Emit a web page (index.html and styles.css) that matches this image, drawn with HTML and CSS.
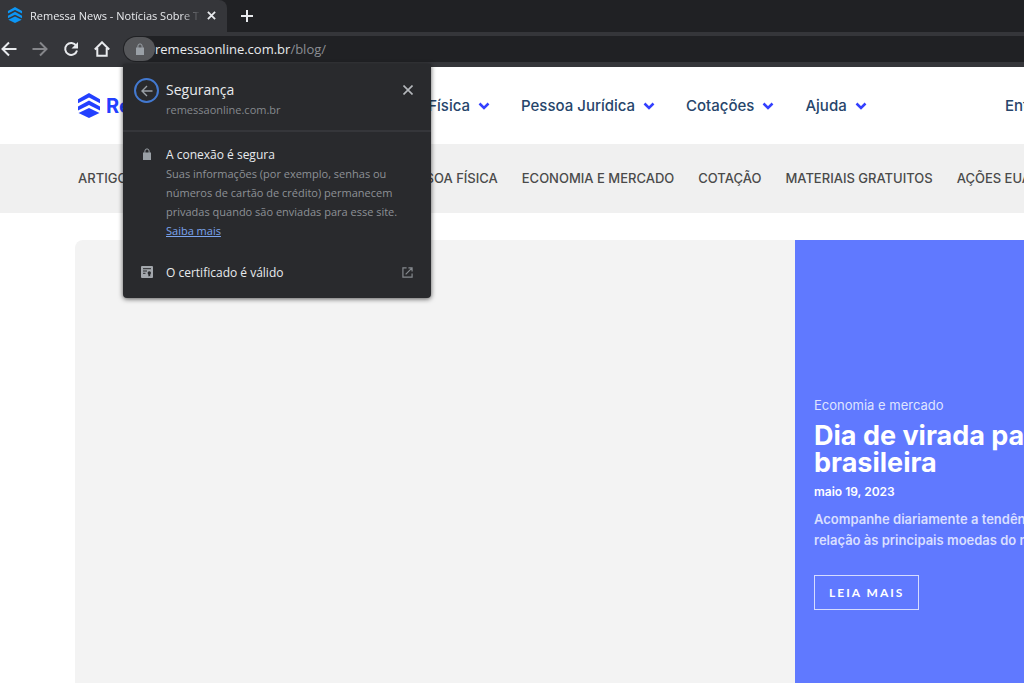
FILE: index.html
```html
<!DOCTYPE html>
<html lang="pt-BR">
<head>
<meta charset="utf-8">
<meta name="viewport" content="width=device-width, initial-scale=1">
<title>Remessa News</title>
<link rel="stylesheet" href="styles.css">
</head>
<body>
<div class="browser">
  <div class="tabstrip">
    <div class="tab">
      <svg class="favicon" viewBox="0 0 22 25" aria-hidden="true"><path d="M11 0 22 6.300v4L11 4.500 0 10.300v-4z"/><path d="M11 7.500 22 13.500v4L11 12 0 17.500v-4z"/><path d="M11 15 21.500 20 11 25 .5 20z"/></svg>
      <span class="tab-title">Remessa News - Notícias Sobre Transferências</span>
      <button class="icon-btn tab-close" aria-label="Fechar guia"><svg viewBox="0 0 10 10"><path d="M1 1l8 8M9 1l-8 8"/></svg></button>
    </div>
    <button class="icon-btn new-tab" aria-label="Nova guia"><svg viewBox="0 0 12 12"><path d="M6 0v12M0 6h12"/></svg></button>
  </div>
  <div class="toolbar">
    <div class="controls">
      <button class="icon-btn" aria-label="Voltar"><svg viewBox="0 0 16 16"><path d="M15.500 8H2M8 1.500 1.500 8 8 14.500"/></svg></button>
      <button class="icon-btn dim" aria-label="Avançar"><svg viewBox="0 0 16 16"><path d="M.5 8H14M8 1.500 14.500 8 8 14.500"/></svg></button>
      <button class="icon-btn" aria-label="Recarregar"><svg viewBox="0 0 16 16"><path d="M13.200 4.600A6 6 0 1 0 14 9.500"/><path class="fill" d="M15 1v6.500H8.500z"/></svg></button>
      <button class="icon-btn" aria-label="Página inicial"><svg viewBox="0 0 16 16"><path d="M.8 8.500 8 1.300l7.200 7.200M3.300 7v7.800h9.400V7"/></svg></button>
    </div>
    <div class="omnibox">
      <button class="lock-btn" aria-label="Informações do site"><svg viewBox="0 0 10 12"><path d="M1 4.500h8V12H1z"/><path class="shackle" d="M2.900 5V3a2.100 2.100 0 0 1 4.200 0v2"/></svg></button>
      <span class="url">remessaonline.com.br<span class="path">/blog/</span></span>
      <section class="popup" aria-label="Segurança">
        <header class="popup-head">
          <button class="back" aria-label="Voltar"><svg viewBox="0 0 12 12"><path d="M11.500 6H1.500M6 1 1 6l5 5"/></svg></button>
          <div class="popup-heading">
            <h2 class="popup-title">Segurança</h2>
            <p class="popup-host">remessaonline.com.br</p>
          </div>
          <button class="icon-btn popup-close" aria-label="Fechar"><svg viewBox="0 0 10 10"><path d="M.5.5l9 9M9.500.5l-9 9"/></svg></button>
        </header>
        <div class="popup-body">
          <svg class="row-lock" viewBox="0 0 10 12" aria-hidden="true"><path d="M1 4.500h8V12H1z"/><path class="shackle" d="M2.900 5V3a2.100 2.100 0 0 1 4.200 0v2"/></svg>
          <div class="connection">
            <h3 class="row-title">A conexão é segura</h3>
            <p class="row-text">Suas informações (por exemplo, senhas ou<br>números de cartão de crédito) permanecem<br>privadas quando são enviadas para esse site.<br><a href="#">Saiba mais</a></p>
          </div>
        </div>
        <button class="cert">
          <svg class="cert-icon" viewBox="0 0 12 12" aria-hidden="true"><rect width="12" height="12" rx="1"/><path d="M2 2.700h8M2 5h4M2 7.300h2.500"/><circle cx="8.300" cy="7" r="1.700"/><path class="ribbon" d="M7.400 8h1.800v2.600l-.9-.6-.9.600z"/></svg>
          <span>O certificado é válido</span>
          <svg class="external" viewBox="0 0 12 12" aria-hidden="true"><path d="M5 1H1v10h10V7M7 1h4v4M11 1 4 8"/></svg>
        </button>
      </section>
    </div>
  </div>
</div>

<header class="site-head">
  <a class="brand" href="#">
    <svg viewBox="0 0 22 25" aria-hidden="true"><path d="M11 0 22 6.300v4L11 4.500 0 10.300v-4z"/><path d="M11 7.500 22 13.500v4L11 12 0 17.500v-4z"/><path d="M11 15 21.500 20 11 25 .5 20z"/></svg>
    <span>Remessa Online</span>
  </a>
  <nav class="main-nav" aria-label="Principal">
    <a href="#">Pessoa Física<svg viewBox="0 0 12 8"><path d="M1.500 1.500 6 6l4.500-4.500"/></svg></a>
    <a href="#">Pessoa Jurídica<svg viewBox="0 0 12 8"><path d="M1.500 1.500 6 6l4.500-4.500"/></svg></a>
    <a href="#">Cotações<svg viewBox="0 0 12 8"><path d="M1.500 1.500 6 6l4.500-4.500"/></svg></a>
    <a href="#">Ajuda<svg viewBox="0 0 12 8"><path d="M1.500 1.500 6 6l4.500-4.500"/></svg></a>
  </nav>
  <a class="login" href="#">Entrar</a>
</header>

<nav class="topics" aria-label="Categorias">
  <a class="topic-first" href="#">ARTIGOS</a>
  <a href="#">PESSOA FÍSICA</a>
  <a href="#">ECONOMIA E MERCADO</a>
  <a href="#">COTAÇÃO</a>
  <a href="#">MATERIAIS GRATUITOS</a>
  <a href="#">AÇÕES EUA</a>
</nav>

<main class="feature">
  <div class="feature-image"></div>
  <article class="feature-card">
    <p class="category">Economia e mercado</p>
    <h1 class="headline">Dia de virada para a bolsa<br>brasileira</h1>
    <p class="date">maio 19, 2023</p>
    <p class="summary">Acompanhe diariamente a tendência do real em<br>relação às principais moedas do mundo</p>
    <a class="more" href="#">LEIA MAIS</a>
  </article>
</main>
</body>
</html>
```
FILE: styles.css
```css
* { box-sizing: border-box; }
body {
  margin: 0;
  min-height: 100vh;
  display: flex;
  flex-direction: column;
  overflow: hidden;
  background: #fff;
  font-family: Inter, "Liberation Sans", sans-serif;
}
h1, h2, h3, p { margin: 0; }
a { color: inherit; text-decoration: none; }
button { padding: 0; border: 0; background: none; color: inherit; font: inherit; }
svg { display: block; flex: none; }

/* Browser chrome */
.browser { color: #e8eaed; font-family: "Open Sans", "Noto Sans", sans-serif; font-size: 12px; }
.tabstrip { display: flex; align-items: center; height: 32px; background: #202124; }
.tab {
  display: flex;
  align-items: center;
  width: 227px;
  height: 32px;
  padding: 0 11px 2px 7px;
  background: #35363a;
  border-radius: 0 8px 0 0;
}
.favicon { width: 16px; height: 16px; fill: #0c96f5; }
.tab-title {
  flex: 1;
  margin: 0 6px 0 7px;
  overflow: hidden;
  white-space: nowrap;
  font-size: 11px;
  mask-image: linear-gradient(90deg, #000 88%, transparent);
}
.icon-btn svg { width: 100%; fill: none; stroke: currentColor; stroke-width: 2; }
.tab-close { width: 9px; }
.new-tab { width: 12px; margin-left: 14px; }
.toolbar {
  display: flex;
  height: 35px;
  padding: 4px 0 5px 1px;
  background: #35363a;
}
.controls { display: flex; align-items: center; gap: 15px; width: 122px; }
.controls .icon-btn { width: 16px; }
.controls .fill { fill: currentColor; stroke: none; }
.controls .dim { color: #85868a; }
.omnibox {
  position: relative;
  flex: 1;
  display: flex;
  align-items: center;
  padding-left: 1px;
  background: #202124;
  border-radius: 13px 0 0 13px;
}
.lock-btn {
  display: grid;
  place-items: center;
  width: 31px;
  height: 24px;
  border-radius: 12px;
  background: #56575a;
}
.lock-btn svg, .row-lock { width: 10px; height: 12px; fill: #9aa0a6; }
.shackle { fill: none; stroke: #9aa0a6; stroke-width: 1; }
.url { font-size: 13px; }
.path { color: #8b8e93; }

/* Security popup hangs from the address bar */
.popup {
  position: absolute;
  z-index: 2;
  top: 28px;
  left: 0;
  width: 308px;
  padding-bottom: 14px;
  background: #292a2d;
  border-radius: 0 0 4px 4px;
  box-shadow: 0 1px 5px rgba(0, 0, 0, .65);
}
.popup-head {
  display: flex;
  align-items: flex-start;
  height: 68px;
  padding: 14px 18px 0 11px;
  border-bottom: 2px solid #35363a;
}
.back {
  display: grid;
  place-items: center;
  width: 25px;
  height: 25px;
  border: 2px solid #4379d0;
  border-radius: 50%;
}
.back svg { width: 12px; fill: none; stroke: #9aa0a6; stroke-width: 1.400; }
.popup-heading { flex: 1; margin-left: 7px; }
.popup-title { font-size: 14px; line-height: 24px; font-weight: 400; }
.popup-host { font-size: 11px; line-height: 15px; color: #85898e; }
.popup-close { width: 10px; margin-top: 7px; color: #b4b7bb; }
.popup-close svg { stroke-width: 1.600; }
.popup-body { display: flex; gap: 14px; padding: 13px 18px 0 19px; }
.row-lock { margin-top: 3px; }
.row-title { font-size: 12px; line-height: 20px; font-weight: 400; }
.row-text { margin-top: -1px; font-size: 11px; line-height: 19px; color: #8d9196; white-space: nowrap; }
.row-text a { color: #7ba4ee; text-decoration: underline; }
.cert {
  display: flex;
  align-items: center;
  width: 100%;
  height: 24px;
  margin-top: 20px;
  padding: 0 18px;
  font-size: 12px;
  text-align: left;
}
.cert span { flex: 1; margin-left: 13px; }
.cert-icon { width: 12px; fill: #a3a7ac; }
.cert-icon path { stroke: #292a2d; }
.cert-icon circle, .cert-icon .ribbon { fill: #292a2d; stroke: none; }
.external { width: 11px; fill: none; stroke: #85898e; stroke-width: 1.300; }

/* Site header */
.site-head {
  display: flex;
  align-items: center;
  height: 77px;
  padding-left: 78px;
  color: #26456b;
  font-size: 15px;
  font-weight: 500;
  white-space: nowrap;
}
.brand {
  display: flex;
  align-items: center;
  gap: 6px;
  flex: none;
  width: 294px;
  overflow: hidden;
  color: #2340ff;
  font-size: 20px;
  font-weight: 700;
}
.brand svg { width: 22px; height: 25px; fill: currentColor; }
.main-nav { display: flex; gap: 31px; }
.main-nav a { display: flex; align-items: center; gap: 8px; }
.main-nav svg { width: 12px; height: 8px; fill: none; stroke: #3340ff; stroke-width: 2.500; }
.login { margin-left: auto; width: 19px; overflow: hidden; }

.topics {
  display: flex;
  align-items: center;
  gap: 24px;
  height: 69px;
  padding: 0 0 2px 78px;
  background: #f0f0f0;
  color: #4a4a4a;
  font-size: 13px;
  font-weight: 500;
  white-space: nowrap;
}
.topic-first { flex: none; width: 299px; }

/* Featured post */
.feature { flex: 1; display: flex; margin: 27px 0 0 75px; overflow: hidden; }
.feature-image { flex: 1; background: #f3f3f3; border-radius: 8px 0 0 0; }
.feature-card {
  width: 229px;
  padding: 156px 0 0 19px;
  background: #6079ff;
  color: #fff;
  overflow: hidden;
  white-space: nowrap;
}
.category { font-size: 13px; line-height: 18px; color: #dfe4ff; }
.headline { margin-top: 8px; font-size: 27px; line-height: 27px; font-weight: 700; }
.date { margin-top: 7px; font-size: 12px; line-height: 18px; font-weight: 600; }
.summary { margin-top: 8px; font-size: 13px; line-height: 21px; font-weight: 600; color: #d9dfff; }
.more {
  display: inline-block;
  margin-top: 24px;
  padding: 0 14px;
  border: 1px solid #d6dcff;
  font-family: Lato, sans-serif;
  font-size: 12px;
  line-height: 33px;
  font-weight: 700;
  letter-spacing: 2px;
}
```
